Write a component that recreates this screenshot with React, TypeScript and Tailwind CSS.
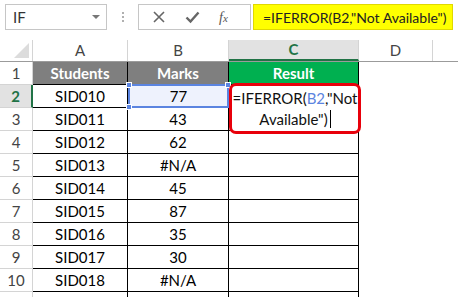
import React from "react";

const data: [string, string][] = [
  ["SID010", "77"],
  ["SID011", "43"],
  ["SID012", "62"],
  ["SID013", "#N/A"],
  ["SID014", "45"],
  ["SID015", "87"],
  ["SID016", "35"],
  ["SID017", "30"],
  ["SID018", "#N/A"],
];

const font = { fontFamily: "Lato, 'Open Sans', sans-serif" };

function Handle({ className }: { className: string }) {
  return <span className={`absolute w-[6px] h-[6px] bg-[#5b84e0] border border-white ${className}`} />;
}

export default function App() {
  return (
    <div className="w-[458px] h-[297px] bg-white overflow-hidden relative text-black" style={font}>
      {/* formula bar */}
      <div className="h-[40px] flex items-start pt-[4px] pl-[5px]">
        <div className="w-[102px] h-[26px] border border-[#c6c6c6] flex items-center justify-between pl-[7px] pr-[6px] text-[15px] text-[#333]">
          <span>IF</span>
          <span className="w-0 h-0 border-l-[4px] border-r-[4px] border-t-[4px] border-l-transparent border-r-transparent border-t-[#777]" />
        </div>
        <div className="w-[31px] h-[26px] flex flex-col items-center justify-center gap-[2px]">
          <span className="w-[2px] h-[2px] bg-[#b0b0b0]" />
          <span className="w-[2px] h-[2px] bg-[#b0b0b0]" />
          <span className="w-[2px] h-[2px] bg-[#b0b0b0]" />
        </div>
        <div className="w-[113px] h-[26px] border border-[#c6c6c6] flex items-center pl-[13px] gap-[19px] text-[#666]">
          <svg width="14" height="14" viewBox="0 0 14 14" stroke="#666" strokeWidth="1.6">
            <path d="M2 2 L12 12 M12 2 L2 12" />
          </svg>
          <svg width="15" height="14" viewBox="0 0 15 14" fill="none" stroke="#666" strokeWidth="2.4">
            <path d="M1.5 7.5 L5.5 11.5 L13.5 2.5" />
          </svg>
          <span className="text-[14px] italic text-[#555]" style={{ fontFamily: "'Liberation Serif', serif" }}>
            f<span className="text-[11px]">x</span>
          </span>
        </div>
        <div className="ml-[2px] w-[200px] h-[26px] bg-[#ffff00] border border-[#e0d800] flex items-center pl-[9px] text-[14px] text-[#222] whitespace-nowrap">
          =IFERROR(B2,"Not Available")
        </div>
      </div>

      {/* column headers */}
      <div className="flex h-[22px] border-b border-[#9b9b9b] text-[15px] text-[#444]">
        <div className="w-[33px] border-r border-[#d4d4d4] flex items-end justify-end pr-[3px] pb-[3px]">
          <svg width="15" height="15" viewBox="0 0 15 15">
            <path d="M15 0 L15 15 L0 15 Z" fill="#dcdcdc" />
          </svg>
        </div>
        <div className="w-[95px] border-r border-[#d4d4d4] flex items-center justify-center">A</div>
        <div className="w-[101px] border-r border-[#d4d4d4] flex items-center justify-center">B</div>
        <div className="w-[130px] border-r border-[#d4d4d4] bg-[#e2e2e2] border-b-2 border-b-[#217346] flex items-center justify-center font-bold text-[#217346]">C</div>
        <div className="w-[74px] border-r border-[#d4d4d4] flex items-center justify-center">D</div>
        <div className="flex-1" />
      </div>

      {/* row 1 */}
      <div className="flex h-[23px] text-[15px]">
        <div className="w-[33px] border-r border-b border-[#d4d4d4] flex items-center justify-center text-[#444]">1</div>
        <div className="w-[95px] bg-[#7f7f7f] border-r border-b border-black flex items-center justify-center font-bold text-white">Students</div>
        <div className="w-[101px] bg-[#7f7f7f] border-r border-b border-black flex items-center justify-center font-bold text-white">Marks</div>
        <div className="w-[130px] bg-[#00b050] border-r border-b border-black flex items-center justify-center font-bold text-white">Result</div>
      </div>

      {data.map(([id, mark], i) => {
        const row = i + 2;
        const active = row === 2;
        return (
          <div key={id} className="flex h-[23px] text-[15px]">
            <div
              className={
                active
                  ? "w-[33px] bg-[#e2e2e2] border-r-2 border-r-[#217346] border-b border-b-[#d4d4d4] flex items-center justify-center font-bold text-[#217346]"
                  : "w-[33px] border-r border-b border-[#d4d4d4] flex items-center justify-center text-[#444]"
              }
            >
              {row}
            </div>
            <div className="w-[95px] border-r border-b border-black flex items-center justify-center">{id}</div>
            <div
              className={
                active
                  ? "w-[101px] relative bg-[#eef2fd] border-2 border-[#5b84e0] -mt-[1px] h-[24px] flex items-center justify-center"
                  : "w-[101px] border-r border-b border-black flex items-center justify-center"
              }
            >
              {mark}
              {active && (
                <>
                  <Handle className="-left-[4px] -top-[4px]" />
                  <Handle className="-left-[4px] -bottom-[4px]" />
                  <Handle className="-right-[4px] -top-[4px]" />
                </>
              )}
            </div>
            <div className="w-[130px] border-r border-b border-black" />
          </div>
        );
      })}
      <div className="flex h-[23px]">
        <div className="w-[33px] border-r border-[#d4d4d4]" />
        <div className="w-[95px] border-r border-black" />
        <div className="w-[101px] border-r border-black" />
        <div className="w-[130px] border-r border-black" />
      </div>

      {/* editing cell C2 */}
      <div className="absolute left-[229px] top-[83px] w-[132px] h-[51px] bg-white border-[3px] border-[#e8000b] rounded-[7px] flex flex-col items-center justify-center text-[15px] leading-[21px] text-[#111]">
        <div className="whitespace-nowrap">
          =IFERROR(<span className="text-[#5b84e0]">B2</span>,"Not
        </div>
        <div className="whitespace-nowrap flex items-center">
          Available")<span className="inline-block w-[1px] h-[18px] bg-black ml-[2px]" />
        </div>
      </div>
    </div>
  );
}
